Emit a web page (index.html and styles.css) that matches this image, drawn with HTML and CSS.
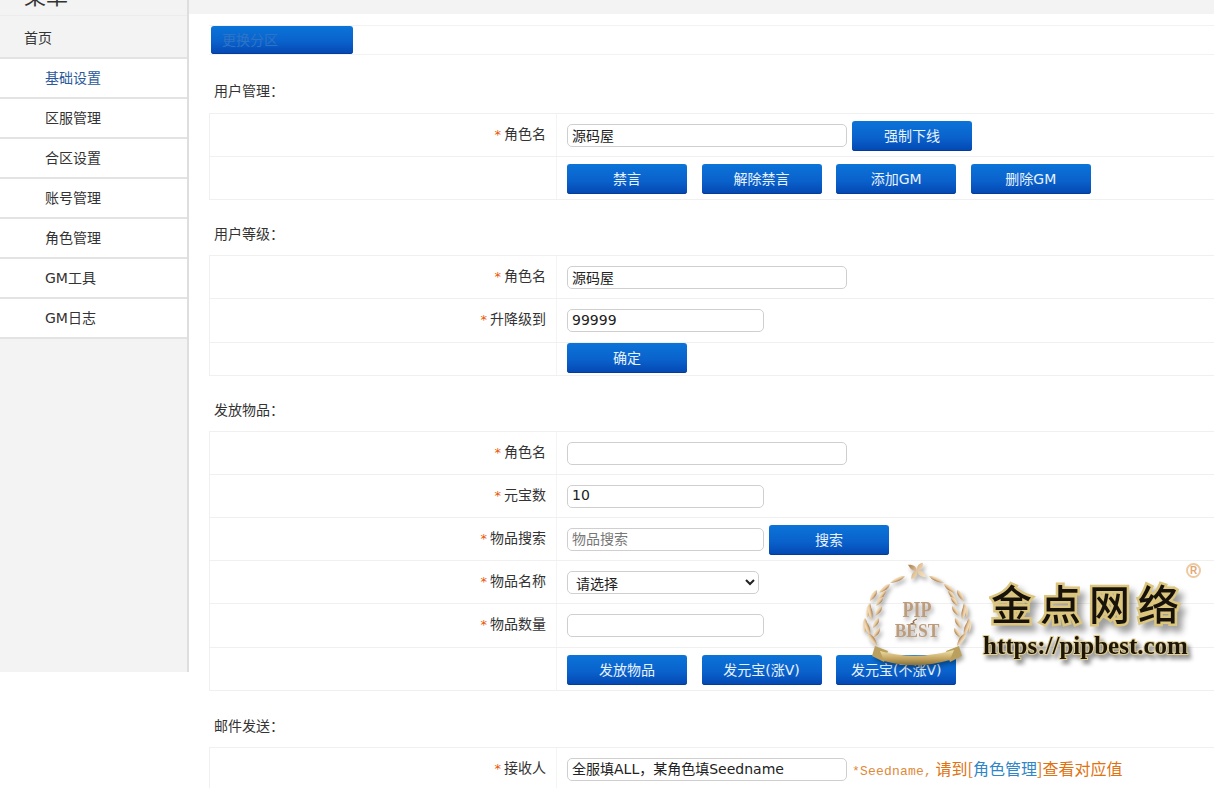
FILE: index.html
```html
<!DOCTYPE html>
<html lang="zh-CN">
<head>
<meta charset="utf-8">
<title>GM工具</title>
<link rel="stylesheet" href="styles.css">
</head>
<body>
<div class="page">
  <aside class="sidebar">
    <div class="side-head"><span>菜单</span></div>
    <nav class="menu">
      <a class="menu-home">首页</a>
      <a class="menu-sub active">基础设置</a>
      <a class="menu-sub">区服管理</a>
      <a class="menu-sub">合区设置</a>
      <a class="menu-sub">账号管理</a>
      <a class="menu-sub">角色管理</a>
      <a class="menu-sub">GM工具</a>
      <a class="menu-sub">GM日志</a>
    </nav>
  </aside>
  <main class="main">
    <div class="topbar"></div>
    <div class="content">
      <div class="zone-row"><button class="btn btn-zone">更换分区</button></div>

      <h3 class="title title-first">用户管理：</h3>
      <div class="panel">
        <div class="row">
          <label class="lab"><i>*</i>角色名</label>
          <div class="field field-high"><input class="inp inp-l" value="源码屋"><button class="btn">强制下线</button></div>
        </div>
        <div class="row">
          <div class="lab"></div>
          <div class="field field-btns"><button class="btn">禁言</button><button class="btn">解除禁言</button><button class="btn">添加GM</button><button class="btn">删除GM</button></div>
        </div>
      </div>

      <h3 class="title">用户等级：</h3>
      <div class="panel">
        <div class="row">
          <label class="lab"><i>*</i>角色名</label>
          <div class="field"><input class="inp inp-l" value="源码屋"></div>
        </div>
        <div class="row">
          <label class="lab"><i>*</i>升降级到</label>
          <div class="field"><input class="inp inp-s" value="99999"></div>
        </div>
        <div class="row row-short">
          <div class="lab"></div>
          <div class="field field-short"><button class="btn">确定</button></div>
        </div>
      </div>

      <h3 class="title">发放物品：</h3>
      <div class="panel">
        <div class="row">
          <label class="lab"><i>*</i>角色名</label>
          <div class="field"><input class="inp inp-l"></div>
        </div>
        <div class="row">
          <label class="lab"><i>*</i>元宝数</label>
          <div class="field"><input class="inp inp-s" value="10"></div>
        </div>
        <div class="row">
          <label class="lab"><i>*</i>物品搜索</label>
          <div class="field field-high"><input class="inp inp-s" placeholder="物品搜索"><button class="btn">搜索</button></div>
        </div>
        <div class="row">
          <label class="lab"><i>*</i>物品名称</label>
          <div class="field"><select class="sel"><option>请选择</option></select></div>
        </div>
        <div class="row">
          <label class="lab"><i>*</i>物品数量</label>
          <div class="field"><input class="inp inp-s"></div>
        </div>
        <div class="row">
          <div class="lab"></div>
          <div class="field field-btns"><button class="btn">发放物品</button><button class="btn">发元宝(涨V)</button><button class="btn">发元宝(不涨V)</button></div>
        </div>
      </div>

      <h3 class="title title-last">邮件发送：</h3>
      <div class="panel">
        <div class="row">
          <label class="lab"><i>*</i>接收人</label>
          <div class="field"><input class="inp inp-l" value="全服填ALL，某角色填Seedname"><span class="hint"><span class="hint-en">*Seedname,</span> 请到[<span class="hint-link">角色管理</span>]查看对应值</span></div>
        </div>
      </div>
    </div>
  </main>
</div>

<div class="logo">
  <svg class="wreath" width="114" height="112" viewBox="0 0 114 112" xmlns="http://www.w3.org/2000/svg">
    <defs>
      <linearGradient id="gold" x1="0" y1="0" x2="1" y2="0">
        <stop offset="0" stop-color="#a87a4c"/>
        <stop offset=".5" stop-color="#e6c79c"/>
        <stop offset="1" stop-color="#f6e6c8"/>
      </linearGradient>
      <linearGradient id="band" x1="0" y1="0" x2="0" y2="1">
        <stop offset="0" stop-color="#efe3a8"/>
        <stop offset=".55" stop-color="#c6a663"/>
        <stop offset="1" stop-color="#84703a"/>
      </linearGradient>
      <path id="leaf" d="M0 0C3.2-3 3.4-8 0-13C-3.4-8-3.2-3 0 0Z" fill="url(#gold)"/>
      <g id="branch">
        <use href="#leaf" transform="translate(45 18) rotate(-115) scale(.75 1.27)"/>
        <use href="#leaf" transform="translate(30 26) rotate(-129) scale(.8 1.08)"/>
        <use href="#leaf" transform="translate(26 32) rotate(-143) scale(.75 1.15)"/>
        <use href="#leaf" transform="translate(17 32) rotate(-147) scale(.85 1)"/>
        <use href="#leaf" transform="translate(23 39) rotate(-142) scale(.75 .85)"/>
        <use href="#leaf" transform="translate(10 45) rotate(-169) scale(.9 1.15)"/>
        <use href="#leaf" transform="translate(22 48) rotate(-145) scale(.8 .92)"/>
        <use href="#leaf" transform="translate(9 47) rotate(169) scale(.8 1.15)"/>
        <use href="#leaf" transform="translate(5 60) rotate(180) scale(.9 1.15)"/>
        <use href="#leaf" transform="translate(19 60) rotate(-149) scale(.8 .92)"/>
        <use href="#leaf" transform="translate(5 63) rotate(160) scale(.85 1.15)"/>
        <use href="#leaf" transform="translate(20 70) rotate(-145) scale(.8 .92)"/>
        <use href="#leaf" transform="translate(8 75) rotate(145) scale(.9 1.23)"/>
      </g>
    </defs>
    <use href="#branch"/>
    <use href="#branch" transform="translate(114 0) scale(-1 1)"/>
    <g transform="rotate(35 57 13)">
      <path d="M57 13C53 9 50 10 46 13C50 15 53 16 57 13ZM57 13C61 9 64 10 68 13C64 15 61 16 57 13ZM57 13C54 9 54 6 57 3C60 6 60 9 57 13ZM57 13C54 16 54 19 57 23C60 19 60 16 57 13Z" fill="url(#gold)"/>
    </g>
    <path d="M15 88L28 93L24 104L12 98ZM99 88L86 93L90 104L102 98Z" fill="#b9a05e"/>
    <path d="M20 93Q55 103 94 92L90 102Q55 112 24 103Z" fill="url(#band)"/>
    <text class="crest" transform="translate(57 59) scale(1 1.25)" text-anchor="middle">PIP</text>
    <path d="M57 61C54 62 52 64 54 65C52 66 51 66 51 65" fill="none" stroke="#8d6a48" stroke-width="1.2"/>
    <text class="crest crest-bot" transform="translate(57 79) scale(1 1.1)" text-anchor="middle">BEST</text>
  </svg>
  <div class="brand">金点网络</div>
  <div class="url">https://pipbest.com</div>
  <div class="reg">R</div>
</div>
</body>
</html>
```
FILE: styles.css
```css
* { box-sizing: border-box; }
html, body { margin: 0; height: 788px; overflow: hidden; background: #fff; }
body {
  font-family: "DejaVu Sans", "Noto Sans CJK SC", sans-serif;
  font-size: 14px;
  color: #333;
  position: relative;
}
.page { display: flex; align-items: flex-start; height: 788px; }

/* sidebar */
.sidebar {
  flex: 0 0 189px;
  height: 672px;
  background: #f3f3f3;
  border-right: 2px solid #dedede;
}
.side-head {
  height: 16px;
  overflow: hidden;
  position: relative;
  border-bottom: 1px solid #ececec;
}
.side-head span {
  position: absolute;
  left: 24px;
  bottom: 6px;
  font-size: 22px;
  line-height: 30px;
  font-family: "Noto Sans CJK SC", sans-serif;
  color: #333;
}
.menu { display: flex; flex-direction: column; padding-top: 3px; }
.menu a {
  display: block;
  height: 40px;
  line-height: 39px;
  border-bottom: 2px solid #e3e3e3;
  font-size: 14px;
}
.menu-home { padding-left: 24px; background: #f3f3f3; }
.menu-sub { padding-left: 45px; background: #fff; }
.menu-sub.active { color: #2a5a9c; }

/* main */
.main { flex: 1; min-width: 0; }
.topbar { height: 14px; background: #f3f3f3; }
.content { padding: 11px 0 0 20px; width: 1045px; }
.zone-row {
  height: 30px;
  padding: 0 0 0 2px;
  border-top: 1px solid #f2f2f2;
  border-bottom: 1px solid #f2f2f2;
  display: flex;
}
.btn {
  flex: none;
  width: 120px;
  height: 30px;
  padding: 0 0 2px;
  border: 0;
  border-radius: 3px;
  background: linear-gradient(#0b74d8, #0a62cc 55%, #0447b2);
  box-shadow: inset 0 -1px 0 #053c98;
  color: #e8f2ff;
  font-family: "DejaVu Sans", "Noto Sans CJK SC", sans-serif;
  font-size: 14px;
}
.btn-zone { width: 142px; height: 28px; color: #2e74c6; text-align: left; padding-left: 11px; }

.title {
  margin: 12.8px 0 0 5px;
  height: 42px;
  line-height: 43px;
  font-size: 14px;
  font-weight: 400;
  color: #333;
}
.title-first { margin-top: 16px; line-height: 40px; }
.title-last { margin-top: 14px; }
.panel { border-top: 1px solid #f0f0f0; border-left: 1px solid #f0f0f0; }
.row { display: flex; height: 43.2px; border-bottom: 1px solid #f0f0f0; }
.row-short { height: 33.4px; }
.lab {
  flex: 0 0 347px;
  padding-right: 10px;
  text-align: right;
  line-height: 41px;
  font-size: 14px;
  border-right: 1px solid #f4f4f4;
}
.lab i { color: #e8590c; font-style: normal; margin-right: 3px; font-size: 13px; }
.field { flex: 1; display: flex; align-items: flex-start; padding: 10px 0 0 10px; }
.field-high { padding-top: 7px; gap: 5px; }
.field-high .inp { margin-top: 3px; }
.field-btns { padding-top: 7px; gap: 14.6px; }
.field-short { padding-top: 0; }
.inp {
  height: 23px;
  padding: 0 4px 2px;
  border: 1px solid #cfcfcf;
  border-radius: 5px;
  background: #fff;
  color: #222;
  font-family: "DejaVu Sans", "Noto Sans CJK SC", sans-serif;
  font-size: 14px;
  outline: 0;
}
.inp::placeholder { color: #777; }
.inp-l { width: 280px; }
.inp-s { width: 197px; }
.sel {
  width: 192px;
  height: 23px;
  padding-left: 4px;
  border: 1px solid #cfcfcf;
  border-radius: 5px;
  background: #fff;
  color: #222;
  font-family: "Noto Sans CJK SC", sans-serif;
  font-size: 14px;
}
.hint {
  margin-left: 5px;
  line-height: 20px;
  font-size: 16px;
  color: #e0720f;
  white-space: nowrap;
  font-family: "Noto Sans CJK SC", sans-serif;
}
.hint-en { font-family: "Liberation Mono", monospace; font-size: 13px; letter-spacing: .2px; color: #e08a3a; }
.hint-link { color: #2f86c8; }

/* watermark logo laid over the page */
.logo { position: absolute; left: 860px; top: 555px; width: 354px; height: 120px; pointer-events: none; }
.wreath { position: absolute; left: 0; top: 3px; filter: drop-shadow(2px 3px 2px rgba(0, 0, 0, .35)); }
.crest { font-family: "Liberation Serif", serif; font-weight: 700; font-size: 18px; fill: #bd9c7c; }
.crest-bot { font-size: 17.5px; }
.brand {
  position: absolute;
  left: 131px;
  top: 20px;
  font-family: "Noto Sans CJK SC", serif;
  font-size: 41px;
  font-weight: 500;
  line-height: 54px;
  letter-spacing: 8px;
  white-space: nowrap;
  color: #17120a;
  -webkit-text-stroke: 5px #dcc67e;
  paint-order: stroke fill;
  filter: drop-shadow(5px 6px 3px rgba(0, 0, 0, .38));
}
.url {
  position: absolute;
  left: 123px;
  top: 77px;
  font-family: "Liberation Serif", serif;
  font-size: 25px;
  font-weight: 700;
  line-height: 28px;
  white-space: nowrap;
  color: #1d1608;
  -webkit-text-stroke: 2px #e2cf92;
  paint-order: stroke fill;
  filter: drop-shadow(3px 4px 2px rgba(0, 0, 0, .45));
}
.reg {
  position: absolute;
  left: 326px;
  top: 8px;
  width: 15px;
  height: 15px;
  border: 2px solid #eec9a0;
  border-radius: 50%;
  color: #e2a878;
  font-family: "Liberation Sans", sans-serif;
  font-size: 10px;
  font-weight: 700;
  line-height: 11px;
  text-align: center;
}
```
